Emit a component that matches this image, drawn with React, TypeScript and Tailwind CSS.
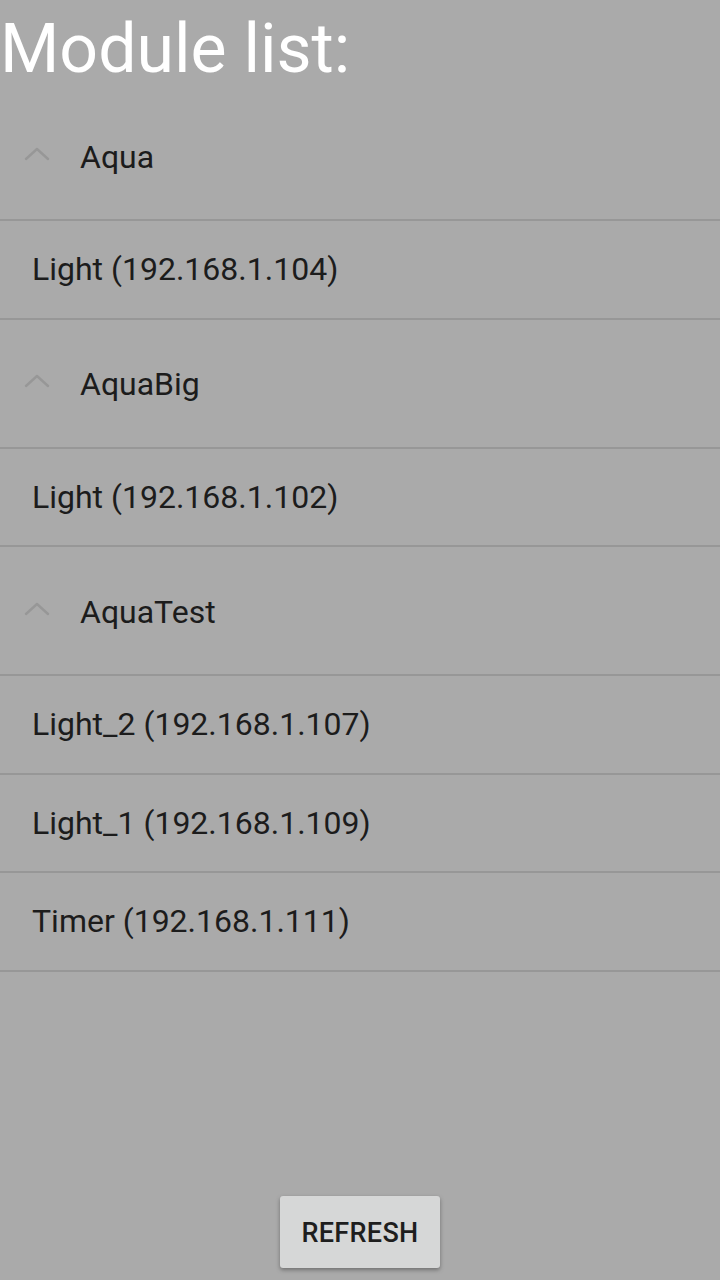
import React from "react";

const Chevron = () => (
  <svg width="26" height="14" viewBox="0 0 26 14" className="shrink-0">
    <path d="M2 12 L13 2 L24 12" fill="none" stroke="#979797" strokeWidth="2.4" strokeLinecap="round" strokeLinejoin="round" />
  </svg>
);

const GroupHeader = ({ name }: { name: string }) => (
  <div className="h-[129px] border-b-2 border-[#979797] flex items-center">
    <div className="w-[80px] pl-[24px] flex items-center pb-[4px]">
      <Chevron />
    </div>
    <span className="text-[32px] text-[#1c1c1c] leading-none pt-[2px]">{name}</span>
  </div>
);

const Item = ({ label }: { label: string }) => (
  <div className="h-[98.5px] border-b-2 border-[#979797] flex items-center pl-[32px]">
    <span className="text-[32px] text-[#1c1c1c] leading-none">{label}</span>
  </div>
);

export default function App() {
  const groups = [
    { name: "Aqua", items: ["Light (192.168.1.104)"] },
    { name: "AquaBig", items: ["Light (192.168.1.102)"] },
    { name: "AquaTest", items: ["Light_2 (192.168.1.107)", "Light_1 (192.168.1.109)", "Timer (192.168.1.111)"] },
  ];
  return (
    <div className="h-[1280px] w-[720px] bg-[#aaaaaa] flex flex-col" style={{ fontFamily: "Roboto, 'Noto Sans', sans-serif" }}>
      <div className="h-[92px] pl-0 pt-[15px]">
        <h1 className="text-[68px] leading-[68px] text-white font-normal">Module list:</h1>
      </div>
      <div className="flex flex-col">
        {groups.map((g) => (
          <React.Fragment key={g.name}>
            <GroupHeader name={g.name} />
            {g.items.map((it) => (
              <Item key={it} label={it} />
            ))}
          </React.Fragment>
        ))}
      </div>
      <div className="flex-1" />
      <div className="flex justify-center pb-[12px]">
        <button className="w-[160px] h-[72px] bg-[#d6d7d7] rounded-[3px] shadow-[0_2px_4px_rgba(0,0,0,0.35)] text-[27px] font-medium text-[#1e1e1e] tracking-[0.3px] pt-[3px]">
          REFRESH
        </button>
      </div>
    </div>
  );
}
